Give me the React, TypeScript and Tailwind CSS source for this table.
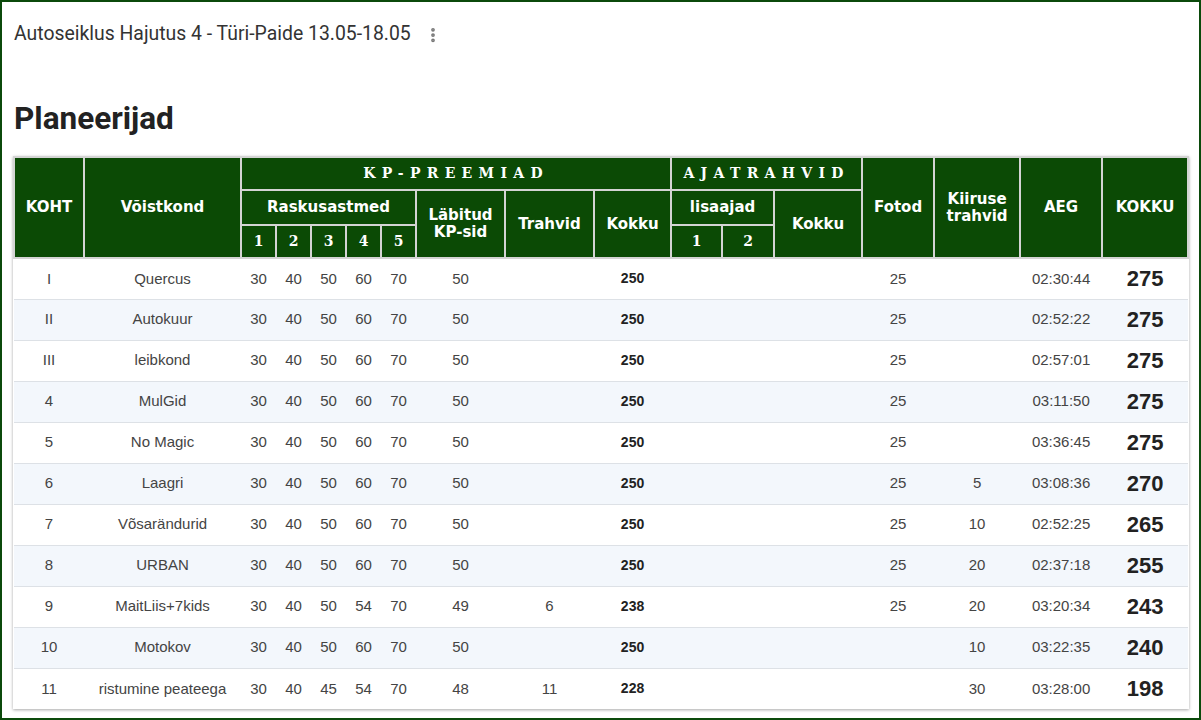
import { EllipsisVertical } from 'lucide-react'

interface Row {
  koht: string
  team: string
  r: string[]
  labitud: string
  trahvid: string
  kokku: string
  fotod: string
  kiirus: string
  aeg: string
  total: string
}

const rows: Row[] = [
  { koht: 'I', team: 'Quercus', r: ['30', '40', '50', '60', '70'], labitud: '50', trahvid: '', kokku: '250', fotod: '25', kiirus: '', aeg: '02:30:44', total: '275' },
  { koht: 'II', team: 'Autokuur', r: ['30', '40', '50', '60', '70'], labitud: '50', trahvid: '', kokku: '250', fotod: '25', kiirus: '', aeg: '02:52:22', total: '275' },
  { koht: 'III', team: 'leibkond', r: ['30', '40', '50', '60', '70'], labitud: '50', trahvid: '', kokku: '250', fotod: '25', kiirus: '', aeg: '02:57:01', total: '275' },
  { koht: '4', team: 'MulGid', r: ['30', '40', '50', '60', '70'], labitud: '50', trahvid: '', kokku: '250', fotod: '25', kiirus: '', aeg: '03:11:50', total: '275' },
  { koht: '5', team: 'No Magic', r: ['30', '40', '50', '60', '70'], labitud: '50', trahvid: '', kokku: '250', fotod: '25', kiirus: '', aeg: '03:36:45', total: '275' },
  { koht: '6', team: 'Laagri', r: ['30', '40', '50', '60', '70'], labitud: '50', trahvid: '', kokku: '250', fotod: '25', kiirus: '5', aeg: '03:08:36', total: '270' },
  { koht: '7', team: 'Võsarändurid', r: ['30', '40', '50', '60', '70'], labitud: '50', trahvid: '', kokku: '250', fotod: '25', kiirus: '10', aeg: '02:52:25', total: '265' },
  { koht: '8', team: 'URBAN', r: ['30', '40', '50', '60', '70'], labitud: '50', trahvid: '', kokku: '250', fotod: '25', kiirus: '20', aeg: '02:37:18', total: '255' },
  { koht: '9', team: 'MaitLiis+7kids', r: ['30', '40', '50', '54', '70'], labitud: '49', trahvid: '6', kokku: '238', fotod: '25', kiirus: '20', aeg: '03:20:34', total: '243' },
  { koht: '10', team: 'Motokov', r: ['30', '40', '50', '60', '70'], labitud: '50', trahvid: '', kokku: '250', fotod: '', kiirus: '10', aeg: '03:22:35', total: '240' },
  { koht: '11', team: 'ristumine peateega', r: ['30', '40', '45', '54', '70'], labitud: '48', trahvid: '11', kokku: '228', fotod: '', kiirus: '30', aeg: '03:28:00', total: '198' },
]

const colWidths = [70, 157, 35, 35, 35, 35, 35, 89, 89, 77, 51, 52, 88, 72, 86, 82, 86]

const th = 'border-2 border-[#d4d4d4] bg-[#0b4a05] text-white font-bold text-center align-middle p-0'
const sans = "font-['DejaVu_Sans',Verdana,sans-serif] text-[15px] leading-[17px]"
const serif = "font-['DejaVu_Serif',Georgia,serif] text-[14px]"

function App() {
  return (
    <div className="w-[1201px] h-[720px] border-2 border-[#0b4a0b] bg-white overflow-hidden font-['Liberation_Sans',Arial,sans-serif]">
      <div className="flex items-center h-[22px] mt-[21px] ml-[12px]">
        <span className="font-['Roboto',sans-serif] text-[19.4px] leading-[22px] text-[#333]">
          Autoseiklus Hajutus 4 - Türi-Paide 13.05-18.05
        </span>
        <EllipsisVertical className="ml-[13px] mt-[2px] w-[18px] h-[18px] text-[#777]" strokeWidth={3} />
      </div>
      <h1 className="ml-[12px] mt-[56px] font-['Roboto',sans-serif] font-bold text-[31.5px] leading-[36px] text-[#222]">
        Planeerijad
      </h1>
      <div className="ml-[11px] mt-[19px] w-[1176px] bg-white shadow-[0_1px_3px_rgba(0,0,0,0.35)]">
        <table className="w-[1176px] table-fixed border-collapse">
          <colgroup>
            {colWidths.map((w, i) => (
              <col key={i} style={{ width: w }} />
            ))}
          </colgroup>
          <thead>
            <tr className="h-[33px]">
              <th rowSpan={3} className={`${th} ${sans}`}>KOHT</th>
              <th rowSpan={3} className={`${th} ${sans}`}>Võistkond</th>
              <th colSpan={8} className={`${th} ${serif} tracking-[6.3px]`}>KP-PREEMIAD</th>
              <th colSpan={3} className={`${th} ${serif} tracking-[6.3px]`}>AJATRAHVID</th>
              <th rowSpan={3} className={`${th} ${sans}`}>Fotod</th>
              <th rowSpan={3} className={`${th} ${sans}`}>Kiiruse<br />trahvid</th>
              <th rowSpan={3} className={`${th} ${sans}`}>AEG</th>
              <th rowSpan={3} className={`${th} ${sans}`}>KOKKU</th>
            </tr>
            <tr className="h-[35px]">
              <th colSpan={5} className={`${th} ${sans}`}>Raskusastmed</th>
              <th rowSpan={2} className={`${th} ${sans}`}>Läbitud<br />KP-sid</th>
              <th rowSpan={2} className={`${th} ${sans}`}>Trahvid</th>
              <th rowSpan={2} className={`${th} ${sans}`}>Kokku</th>
              <th colSpan={2} className={`${th} ${sans}`}>lisaajad</th>
              <th rowSpan={2} className={`${th} ${sans}`}>Kokku</th>
            </tr>
            <tr className="h-[33px]">
              {['1', '2', '3', '4', '5', '1', '2'].map((n, i) => (
                <th key={i} className={`${th} ${serif}`}>{n}</th>
              ))}
            </tr>
          </thead>
          <tbody>
            {rows.map((row, i) => (
              <tr
                key={i}
                className={`h-[41px] border-t border-[#dde1e6] text-[15px] text-[#444] text-center ${i % 2 === 1 ? 'bg-[#f3f7fc]' : 'bg-white'}`}
              >
                <td>{row.koht}</td>
                <td>{row.team}</td>
                {row.r.map((v, j) => (
                  <td key={j}>{v}</td>
                ))}
                <td>{row.labitud}</td>
                <td>{row.trahvid}</td>
                <td className="font-bold text-[14px] text-[#222]">{row.kokku}</td>
                <td></td>
                <td></td>
                <td></td>
                <td>{row.fotod}</td>
                <td>{row.kiirus}</td>
                <td>{row.aeg}</td>
                <td className="font-bold text-[22px] text-[#222]">{row.total}</td>
              </tr>
            ))}
          </tbody>
        </table>
      </div>
    </div>
  )
}

export default App
